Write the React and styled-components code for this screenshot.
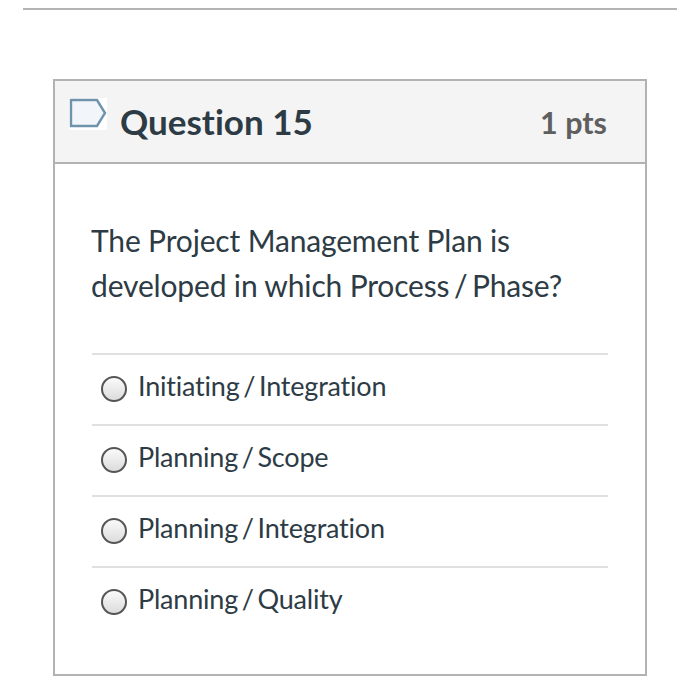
import React from "react";
import styled, { createGlobalStyle } from "styled-components";

const GlobalStyle = createGlobalStyle`
    html, body {
        margin: 0;
        padding: 0;
        background: #fff;
        font-family: Lato, "Liberation Sans", sans-serif;
        font-variant-ligatures: none;
    }
`;

const Page = styled.div`
    width: 700px;
    height: 693px;
    overflow: hidden;
    padding: 8px 23px 0 23px;
    box-sizing: border-box;
`;

const TopRule = styled.div`
    height: 2px;
    background: #b4b4b4;
`;

const Card = styled.section`
    margin: 69px 30px 0 30px;
    height: 597px;
    box-sizing: border-box;
    border: 2px solid #b2b2b2;
    display: flex;
    flex-direction: column;
`;

const Header = styled.header`
    height: 83px;
    box-sizing: border-box;
    flex: none;
    background: #f4f4f5;
    border-bottom: 2px solid #b2b2b2;
    display: flex;
    align-items: center;
    justify-content: space-between;
    padding: 0 38px 0 14px;
`;

const TitleGroup = styled.div`
    display: flex;
    align-items: center;
    gap: 13px;
`;

const Flag = styled.svg`
    width: 38px;
    height: 32px;
    flex: none;
    margin-top: -15px;
`;

const Title = styled.h2`
    margin: -2px 0 0 0;
    font-size: 35px;
    font-weight: 700;
    color: #2d3b45;
    line-height: 40px;
`;

const Points = styled.span`
    font-size: 30.5px;
    font-weight: 700;
    color: #5f5f5f;
`;

const Body = styled.div`
    padding: 54px 37px 0 37px;
`;

const Prompt = styled.p`
    margin: 0 0 45px -1px;
    font-size: 30px;
    line-height: 45px;
    letter-spacing: -0.16px;
    color: #2d3b45;
`;

const Answer = styled.label`
    display: flex;
    align-items: center;
    gap: 11px;
    height: 71px;
    box-sizing: border-box;
    border-top: 2px solid #e0e0e0;
    padding-left: 9px;
`;

const Radio = styled.span`
    width: 26px;
    height: 26px;
    box-sizing: border-box;
    flex: none;
    margin-top: -2px;
    border: 2px solid #555;
    border-radius: 50%;
    background: linear-gradient(#fafafa, #dcdcdc);
`;

const AnswerText = styled.span`
    font-size: 27px;
    letter-spacing: -0.2px;
    color: #2d3b45;
    margin-top: -9px;
`;

const Slash = styled.span`
    word-spacing: -3px;
`;

const answers = [
    ["Initiating", "Integration"],
    ["Planning", "Scope"],
    ["Planning", "Integration"],
    ["Planning", "Quality"],
];

function App() {
    return (
        <Page>
            <GlobalStyle />
            <TopRule />
            <Card>
                <Header>
                    <TitleGroup>
                        <Flag viewBox="0 0 38 32">
                            <rect width="38" height="32" fill="#fff" />
                            <path
                                d="M2 2H28L36 15L28 28H2Z"
                                fill="#f2f6fa"
                                stroke="#6f93ab"
                                strokeWidth="2.4"
                            />
                        </Flag>
                        <Title>Question 15</Title>
                    </TitleGroup>
                    <Points>1 pts</Points>
                </Header>
                <Body>
                    <Prompt>
                        The Project Management Plan is
                        <br />
                        developed in which Process<Slash> / </Slash>Phase?
                    </Prompt>
                    {answers.map(([phase, area]) => (
                        <Answer key={phase + area}>
                            <Radio />
                            <AnswerText>
                                {phase}
                                <Slash> / </Slash>
                                {area}
                            </AnswerText>
                        </Answer>
                    ))}
                </Body>
            </Card>
        </Page>
    );
}

export default App;
